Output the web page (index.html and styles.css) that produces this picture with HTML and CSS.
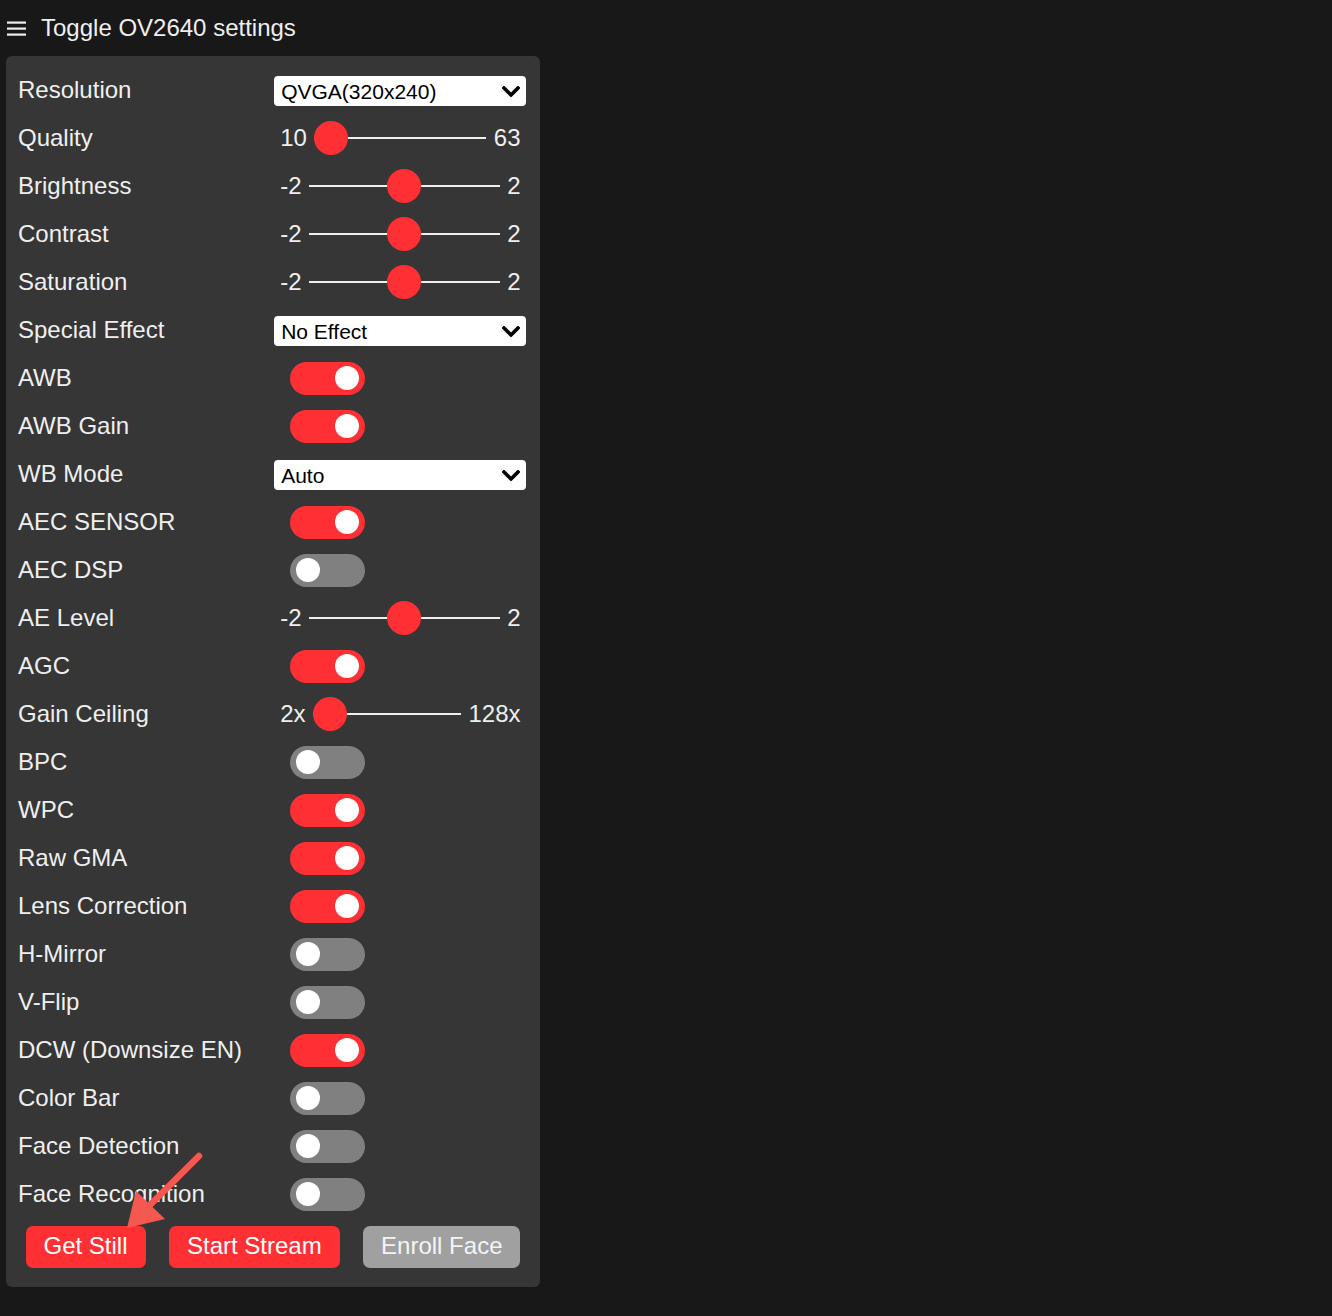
FILE: index.html
```html
<!DOCTYPE html>
<html>
<head>
<meta charset="utf-8">
<title>OV2640 settings</title>
<link rel="stylesheet" href="styles.css">
</head>
<body>
<div class="header">
  <svg class="hamburger" width="19" height="15" viewBox="0 0 19 15"><rect x="0" y="0.5" width="19" height="2.2" fill="#efefef"/><rect x="0" y="6.5" width="19" height="2.2" fill="#efefef"/><rect x="0" y="12.5" width="19" height="2.2" fill="#efefef"/></svg>
  <span class="header-title">Toggle OV2640 settings</span>
</div>
<nav class="menu">
  <div class="input-group"><label>Resolution</label><div class="select"><span>QVGA(320x240)</span><svg width="18" height="11" viewBox="0 0 18 11"><path d="M2 2 L9 9 L16 2" fill="none" stroke="#000" stroke-width="3.6" stroke-linecap="square"/></svg></div></div>
  <div class="input-group"><label>Quality</label><div class="range-min">10</div><input type="range" min="10" max="63" value="10"><div class="range-max">63</div></div>
  <div class="input-group"><label>Brightness</label><div class="range-min">-2</div><input type="range" min="-2" max="2" value="0"><div class="range-max">2</div></div>
  <div class="input-group"><label>Contrast</label><div class="range-min">-2</div><input type="range" min="-2" max="2" value="0"><div class="range-max">2</div></div>
  <div class="input-group"><label>Saturation</label><div class="range-min">-2</div><input type="range" min="-2" max="2" value="0"><div class="range-max">2</div></div>
  <div class="input-group"><label>Special Effect</label><div class="select"><span>No Effect</span><svg width="18" height="11" viewBox="0 0 18 11"><path d="M2 2 L9 9 L16 2" fill="none" stroke="#000" stroke-width="3.6" stroke-linecap="square"/></svg></div></div>
  <div class="input-group"><label>AWB</label><div class="switch on"></div></div>
  <div class="input-group"><label>AWB Gain</label><div class="switch on"></div></div>
  <div class="input-group"><label>WB Mode</label><div class="select"><span>Auto</span><svg width="18" height="11" viewBox="0 0 18 11"><path d="M2 2 L9 9 L16 2" fill="none" stroke="#000" stroke-width="3.6" stroke-linecap="square"/></svg></div></div>
  <div class="input-group"><label>AEC SENSOR</label><div class="switch on"></div></div>
  <div class="input-group"><label>AEC DSP</label><div class="switch"></div></div>
  <div class="input-group"><label>AE Level</label><div class="range-min">-2</div><input type="range" min="-2" max="2" value="0"><div class="range-max">2</div></div>
  <div class="input-group"><label>AGC</label><div class="switch on"></div></div>
  <div class="input-group"><label>Gain Ceiling</label><div class="range-min">2x</div><input type="range" min="0" max="6" value="0"><div class="range-max">128x</div></div>
  <div class="input-group"><label>BPC</label><div class="switch"></div></div>
  <div class="input-group"><label>WPC</label><div class="switch on"></div></div>
  <div class="input-group"><label>Raw GMA</label><div class="switch on"></div></div>
  <div class="input-group"><label>Lens Correction</label><div class="switch on"></div></div>
  <div class="input-group"><label>H-Mirror</label><div class="switch"></div></div>
  <div class="input-group"><label>V-Flip</label><div class="switch"></div></div>
  <div class="input-group"><label>DCW (Downsize EN)</label><div class="switch on"></div></div>
  <div class="input-group"><label>Color Bar</label><div class="switch"></div></div>
  <div class="input-group"><label>Face Detection</label><div class="switch"></div></div>
  <div class="input-group"><label>Face Recognition</label><div class="switch"></div></div>
  <section class="buttons">
    <button>Get Still</button>
    <button>Start Stream</button>
    <button class="disabled">Enroll Face</button>
  </section>
</nav>
<svg class="annotation" width="1332" height="1316" viewBox="0 0 1332 1316">
  <line x1="199" y1="1156" x2="148" y2="1207" stroke="#f5584f" stroke-width="6.5" stroke-linecap="round"/>
  <polygon points="127,1228 165,1219 136,1191" fill="#f5584f"/>
</svg>
</body>
</html>
```
FILE: styles.css
```css
html, body {
  margin: 0;
  padding: 0;
}
body {
  background: #181818;
  color: #efefef;
  font-family: "Liberation Sans", Arial, Helvetica, sans-serif;
  font-size: 24px;
  position: relative;
  min-height: 1316px;
}
.header {
  display: flex;
  align-items: center;
  height: 56px;
  padding-left: 7px;
  gap: 15px;
}
.hamburger {
  display: block;
}
.header-title {
  line-height: 24px;
}
.menu {
  display: flex;
  flex-direction: column;
  width: 534px;
  box-sizing: border-box;
  margin-left: 6px;
  background: #363636;
  border-radius: 6px;
  padding: 10px 12px 12px 12px;
}
.input-group {
  display: flex;
  flex-wrap: nowrap;
  align-items: center;
  height: 33px;
  line-height: 33px;
  margin: 7.5px 0;
}
.input-group > label {
  display: inline-block;
  padding-right: 15px;
  padding-bottom: 2px;
  min-width: 47%;
  white-space: nowrap;
}
.select {
  flex-grow: 1;
  height: 30px;
  margin: 2px 2px 0 1.5px;
  background: #fff;
  color: #000;
  border-radius: 4px;
  font-size: 21px;
  line-height: 30px;
  display: flex;
  align-items: center;
  justify-content: space-between;
  padding: 0 6px 0 7px;
  box-sizing: border-box;
}
.select span {
  padding-top: 2px;
}
.select svg {
  display: block;
}
.range-min, .range-max {
  display: inline-block;
  padding: 0 7.5px 2px 7.5px;
}
input[type=range] {
  -webkit-appearance: none;
  appearance: none;
  flex-grow: 1;
  width: 10px;
  height: 33px;
  background: #363636;
  margin: 0;
  padding: 0;
}
input[type=range]::-webkit-slider-runnable-track {
  width: 100%;
  height: 2px;
  background: #efefef;
  border: 0;
  border-radius: 0;
}
input[type=range]::-webkit-slider-thumb {
  -webkit-appearance: none;
  height: 34px;
  width: 34px;
  border-radius: 50%;
  background: #ff3034;
  border: 0;
  margin-top: -16px;
}
.switch {
  position: relative;
  width: 75px;
  height: 33px;
  margin-left: 17px;
  border-radius: 33px;
  background: #808080;
}
.switch::before {
  content: "";
  position: absolute;
  width: 24px;
  height: 24px;
  left: 6px;
  top: 4.5px;
  border-radius: 50%;
  background: #fff;
}
.switch.on {
  background: #ff3034;
}
.switch.on::before {
  left: 45px;
}
.buttons {
  display: flex;
  flex-wrap: nowrap;
  justify-content: space-between;
}
button {
  display: block;
  margin: 7.5px;
  padding: 0 18px 3px 18px;
  border: 0;
  line-height: 39px;
  height: 42px;
  box-sizing: border-box;
  color: #fff;
  background: #ff3034;
  border-radius: 7px;
  font-size: 24px;
  font-family: "Liberation Sans", Arial, Helvetica, sans-serif;
  outline: 0;
}
button.disabled {
  background: #a0a0a0;
  color: #f4f4f4;
}
.annotation {
  position: absolute;
  left: 0;
  top: 0;
  pointer-events: none;
}
```
